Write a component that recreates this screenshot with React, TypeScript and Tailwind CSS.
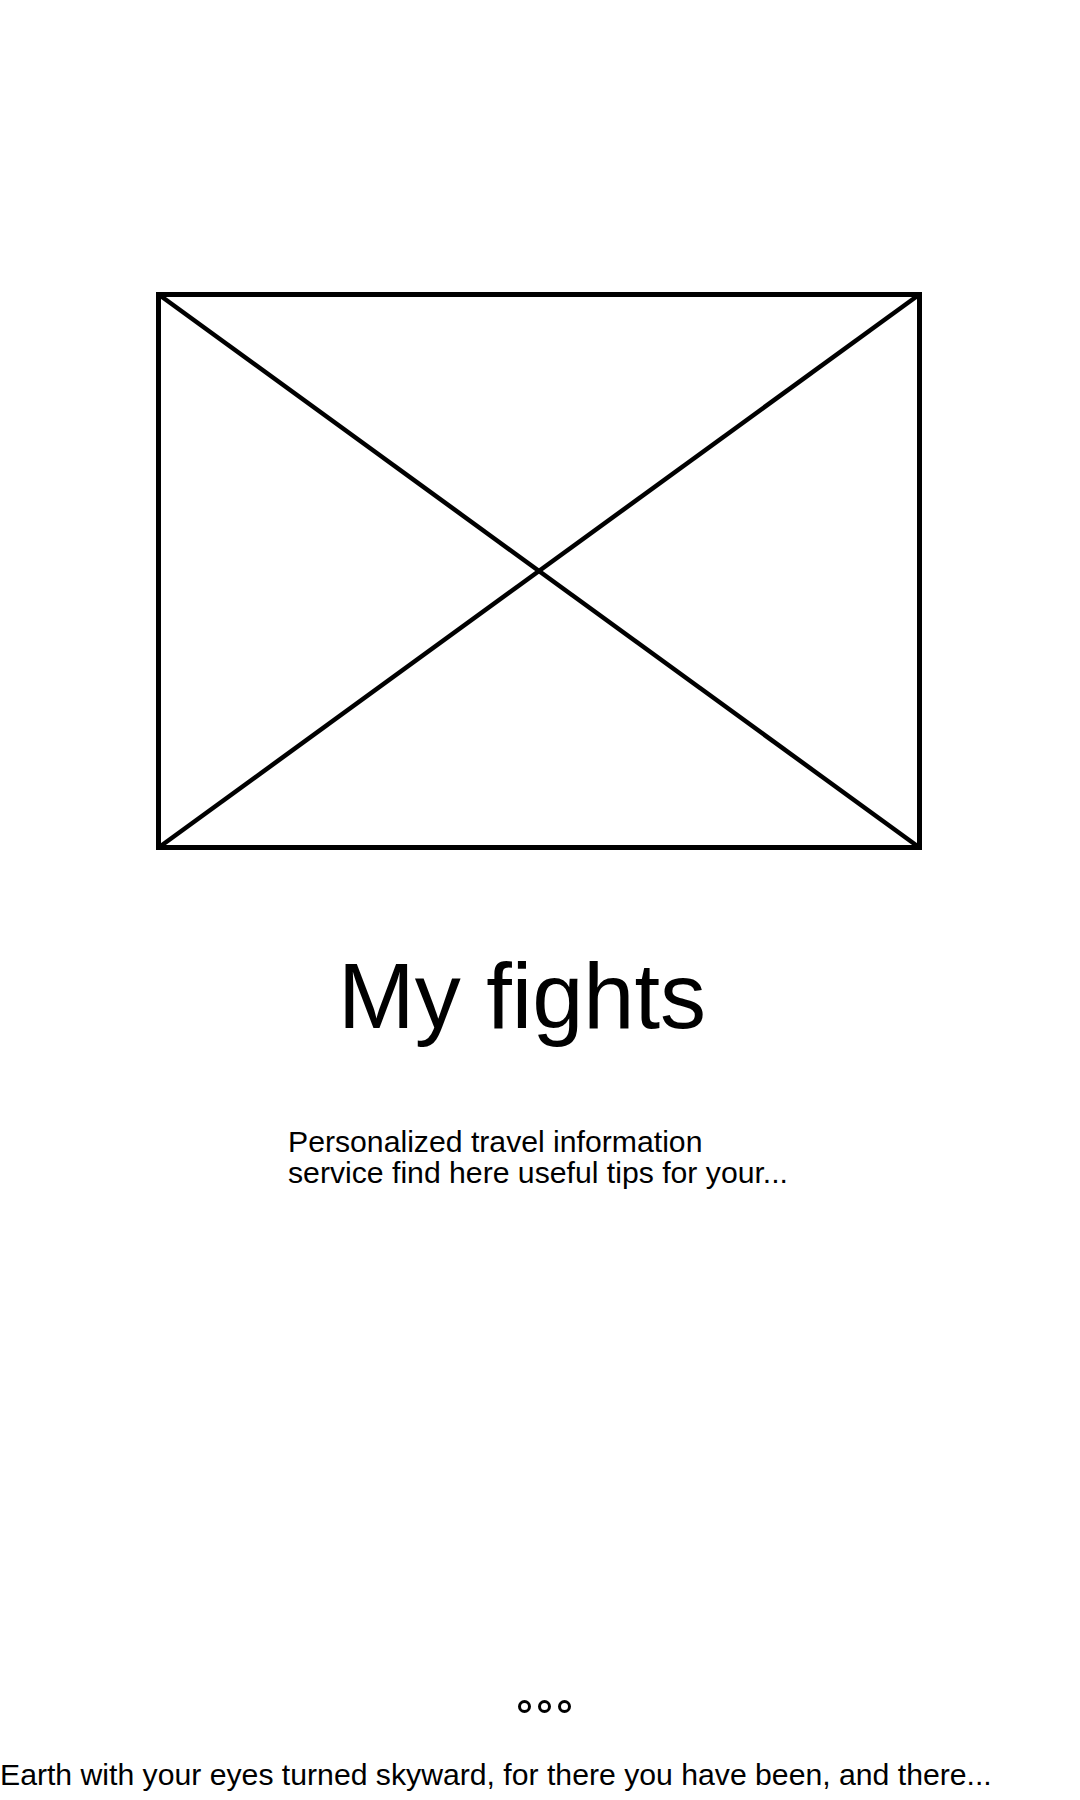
import React from "react"

const Placeholder = () => {
  // image placeholder: box with two diagonals
  return (
    <svg width="766" height="558" viewBox="0 0 766 558" fill="none">
      <rect x="2.5" y="2.5" width="761" height="553" stroke="#000" strokeWidth="5" />
      <line x1="2" y1="2" x2="764" y2="556" stroke="#000" strokeWidth="4.5" />
      <line x1="764" y1="2" x2="2" y2="556" stroke="#000" strokeWidth="4.5" />
    </svg>
  )
}

const App = () => {
  return (
    <div className="w-[1080px] h-[1800px] bg-white text-black flex flex-col font-['Liberation_Sans',Arial,sans-serif] overflow-hidden">
      <div className="pt-[292px] pl-[156px]">
        <Placeholder />
      </div>

      <h1 className="mt-[100px] pl-[338px] text-[92px] leading-[92px] font-normal">
        My fights
      </h1>

      <p className="mt-[84px] pl-[288px] text-[30.2px] leading-[31px]">
        Personalized travel information
        <br />
        service find here useful tips for your...
      </p>

      {/* pager dots */}
      <div className="mt-[512px] pl-[518px] flex gap-[7px]">
        <span className="w-[13px] h-[13px] rounded-full border-[3px] border-black" />
        <span className="w-[13px] h-[13px] rounded-full border-[3px] border-black" />
        <span className="w-[13px] h-[13px] rounded-full border-[3px] border-black" />
      </div>

      <div className="mt-[45px] text-[30.2px] leading-[34px] whitespace-nowrap">
        Earth with your eyes turned skyward, for there you have been, and there...
      </div>
    </div>
  )
}

export default App
